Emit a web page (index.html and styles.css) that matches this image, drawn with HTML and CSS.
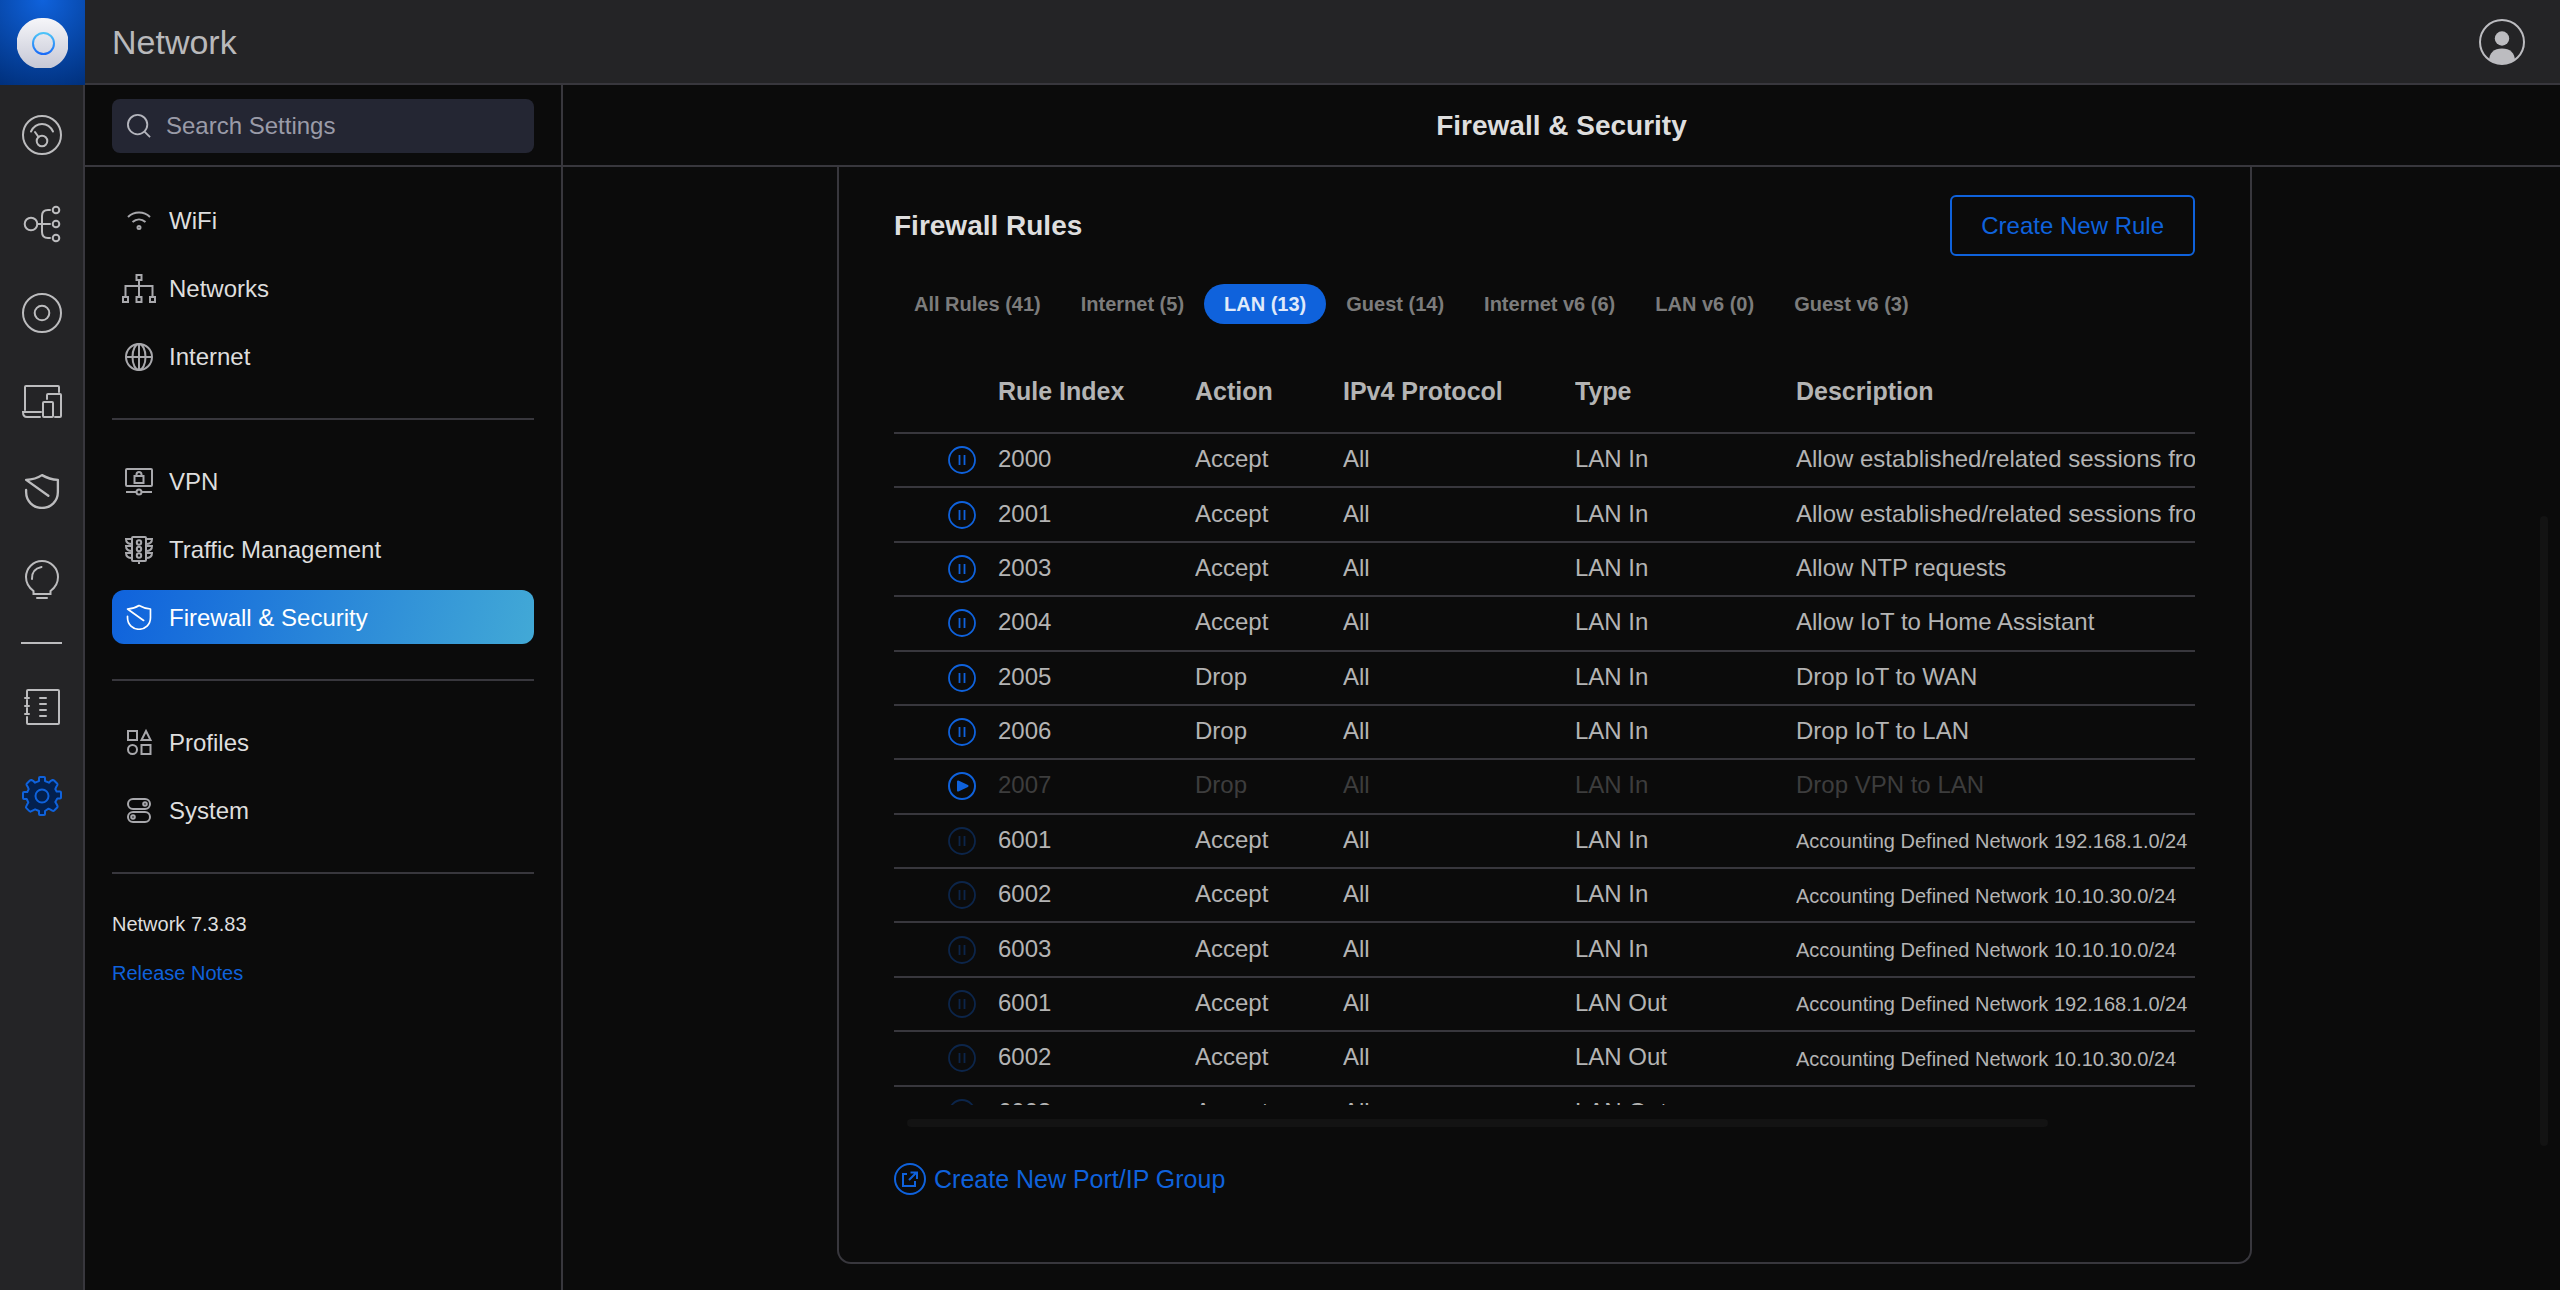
FILE: index.html
```html
<!DOCTYPE html>
<html lang="en">
<head>
<meta charset="utf-8">
<meta name="viewport" content="width=device-width, initial-scale=1">
<title>Network - Firewall &amp; Security</title>
<link rel="stylesheet" href="styles.css">
</head>
<body>
<svg class="sprite" aria-hidden="true">
  <symbol id="pause" viewBox="0 0 28 28"><circle cx="14" cy="14" r="13" fill="none" stroke="currentColor" stroke-width="1.800"/><path d="M11.500 9v10M16.500 9v10" stroke="currentColor" stroke-width="1.800"/></symbol>
  <symbol id="play" viewBox="0 0 28 28"><circle cx="14" cy="14" r="13" fill="none" stroke="currentColor" stroke-width="2"/><path d="M10 9.500 19.500 14 10 18.500z" fill="currentColor" stroke="currentColor" stroke-width="2" stroke-linejoin="round"/></symbol>
  <symbol id="shield" viewBox="0 0 34 34"><path d="M2 16v2c0 9 7 15 15 15s15-6 15-15V6.500Q24 6 17 2 11 6 2 6.500L23 21.500" fill="none" stroke="currentColor" stroke-width="2.200" stroke-linecap="round" stroke-linejoin="round"/></symbol>
</svg>
<div class="app">
  <header class="topbar">
    <a class="brand" href="#" aria-label="UniFi home">
      <svg width="52" height="52" viewBox="0 0 52 52"><defs><linearGradient id="disc" x1="0" y1="0" x2="0" y2="1"><stop offset="0" stop-color="#f6f6f9"/><stop offset="1" stop-color="#c6c8d6"/></linearGradient><linearGradient id="ring" x1="0" y1="0" x2="0" y2="1"><stop offset="0" stop-color="#4dc4f8"/><stop offset="1" stop-color="#1a6cf8"/></linearGradient></defs><path d="M26 1A25 25 0 0 1 51 20V32A25 25 0 0 1 34 51H18A25.500 25.500 0 0 1 26 1z" fill="url(#disc)"/><circle cx="26.500" cy="26.500" r="10.500" fill="none" stroke="url(#ring)" stroke-width="2"/></svg>
    </a>
    <h1 class="app-name">Network</h1>
    <button class="account" type="button" aria-label="Account">
      <svg width="46" height="46" viewBox="0 0 46 46"><defs><clipPath id="face"><circle cx="23" cy="23" r="22"/></clipPath></defs><circle cx="23" cy="23" r="22" fill="none" stroke="#bcbcc0" stroke-width="2"/><circle cx="23" cy="19.500" r="7.200" fill="#bcbcc0"/><path clip-path="url(#face)" d="M10 46v-4c0-8 5-12.500 13-12.500S36 34 36 42v4z" fill="#bcbcc0"/></svg>
    </button>
  </header>

  <nav class="rail" aria-label="Main">
    <a href="#" aria-label="Dashboard"><svg width="42" height="42" viewBox="0 0 42 42"><circle cx="21" cy="21" r="19"/><circle cx="21" cy="27" r="5.300"/><path d="M17.500 23 14 18M10 17.500c5-10 17-10 22 0"/></svg></a>
    <a href="#" aria-label="Topology"><svg width="42" height="42" viewBox="0 0 42 42"><circle cx="10" cy="21" r="6.300"/><circle cx="35" cy="7" r="3.300"/><circle cx="35" cy="21" r="3.300"/><circle cx="35" cy="35" r="3.300"/><path d="M16.500 21H29M29 7h-2q-6 0-6 6v16q0 6 6 6h2"/></svg></a>
    <a href="#" aria-label="Devices"><svg width="42" height="42" viewBox="0 0 42 42"><circle cx="21" cy="21" r="19"/><circle cx="21" cy="21" r="7.300"/></svg></a>
    <a href="#" aria-label="Clients"><svg width="42" height="42" viewBox="0 0 42 42"><path d="M4 29V6q0-1 1-1h32q1 0 1 1v5M20 31H2q0 5 4 5h13M26 18v-4q0-1 1-1h12q1 0 1 1v21q0 1-1 1h-5"/><rect x="22" y="21" width="10" height="15" rx="1"/></svg></a>
    <a href="#" aria-label="Security"><svg width="36" height="36"><use href="#shield"/></svg></a>
    <a href="#" aria-label="Insights"><svg width="42" height="42" viewBox="0 0 42 42"><path d="M12.500 35v-3Q5 26.500 5 18a16 16 0 0 1 32 0q0 8.500-7.500 14v3zM16 39h10M11 20q-.5-10 9.500-12"/></svg></a>
    <hr>
    <a href="#" aria-label="System Log"><svg width="42" height="42" viewBox="0 0 42 42"><path d="M6 12V5q0-1 1-1h30q1 0 1 1v32q0 1-1 1H7q-1 0-1-1v-6M6 14v6M6 22v6M4 12h4M4 20h4M4 28h4M19 12h6M19 18h6M19 24h6M19 30h6"/></svg></a>
    <a class="current" href="#" aria-label="Settings"><svg width="42" height="42" viewBox="0 0 42 42"><path d="M16.500 6.700 18 6V3q0-1 1-1h4q1 0 1 1v3l3.900 1.700 1.500-1.500 2.200-1.200q.7-.3 1.500.5l3 3q.7.700.3 1.500l-1.200 2-.9 2.100 1.300 2.400H39q1 0 1 1v5q0 1-1 1h-2.700l-2 3.400 1.200 2.100 1 2q.4.800-.3 1.500l-3 3q-.8.800-1.500.3l-2.200-1.100-2-1L24 36v3q0 1-1 1h-4q-1 0-1-1v-3l-3.900-1.700-2 1-2.200 1.100q-.7.500-1.500-.3l-3-3q-.7-.7-.3-1.500l1-2 1.200-2.100L5.700 24H3q-1 0-1-1v-5q0-1 1-1h3.300l1.400-2.900-.9-2.100-1.200-2q-.4-.8.300-1.500l3-3q.8-.8 1.500-.5l2.200 1.200 1.500 1.500z" stroke-linejoin="round"/><circle cx="21" cy="21" r="6.500"/></svg></a>
  </nav>

  <aside class="settings">
    <div class="search-bar">
      <label class="search">
        <svg width="24" height="24" viewBox="0 0 26 26"><circle cx="11.500" cy="11.500" r="10.500"/><path d="m19 19 6 6"/></svg>
        <input type="search" placeholder="Search Settings" aria-label="Search Settings">
      </label>
    </div>
    <nav class="menu" aria-label="Settings">
      <ul>
        <li><a href="#"><svg viewBox="0 0 34 34"><path d="M6 13c6-6 16-6 22 0M10.500 18c4-3.500 9-3.500 13 0"/><circle cx="17" cy="23.500" r="1.500"/></svg>WiFi</a></li>
        <li><a href="#"><svg viewBox="0 0 34 34"><rect x="14.500" y="3" width="5" height="5"/><rect x="1" y="25" width="5" height="5"/><rect x="14.500" y="25" width="5" height="5"/><rect x="28" y="25" width="5" height="5"/><path d="M17 8v17M3.500 25V14h27v11"/></svg>Networks</a></li>
        <li><a href="#"><svg viewBox="0 0 34 34"><circle cx="17" cy="17" r="13"/><ellipse cx="17" cy="17" rx="6.500" ry="13"/><path d="M17 4v26M4 17h26"/></svg>Internet</a></li>
      </ul>
      <ul>
        <li><a href="#"><svg viewBox="0 0 34 34"><rect x="4" y="4" width="26" height="17" rx="1"/><rect x="12.500" y="11" width="9" height="7"/><path d="M14.500 11V9.500a2.500 2.500 0 0 1 5 0V11M4 27h10.500M19.500 27H30"/><circle cx="17" cy="27" r="2.500"/></svg>VPN</a></li>
        <li><a href="#"><svg viewBox="0 0 34 34"><rect x="10" y="4" width="14" height="24" rx="1"/><circle cx="17" cy="9.500" r="2.200"/><circle cx="17" cy="16" r="2.200"/><circle cx="17" cy="22.500" r="2.200"/><path d="M17 28v3M10 6H4q0 5 6 5M10 13H4q0 5 6 5M10 20H4q0 5 6 5M24 6h6q0 5-6 5M24 13h6q0 5-6 5M24 20h6q0 5-6 5"/></svg>Traffic Management</a></li>
        <li><a class="current" href="#" aria-current="page"><svg viewBox="0 0 34 34"><use href="#shield" x="4" y="3" width="26" height="26"/></svg>Firewall &amp; Security</a></li>
      </ul>
      <ul>
        <li><a href="#"><svg viewBox="0 0 34 34"><rect x="6" y="5" width="9" height="9"/><path d="m24 5 4.500 9h-9z"/><circle cx="10.500" cy="23.500" r="4.500"/><rect x="19.500" y="19" width="9" height="9"/></svg>Profiles</a></li>
        <li><a href="#"><svg viewBox="0 0 34 34"><rect x="6" y="5" width="22" height="10" rx="5"/><rect x="6" y="18" width="22" height="10" rx="5"/><circle cx="23" cy="10" r="1.800"/><circle cx="11" cy="23" r="1.800"/></svg>System</a></li>
      </ul>
    </nav>
    <footer class="about">
      <p>Network 7.3.83</p>
      <a href="#">Release Notes</a>
    </footer>
  </aside>

  <main class="content">
    <div class="page-title"><h2>Firewall &amp; Security</h2></div>
    <div class="page">
      <section class="card">
        <div class="card-head">
          <h3>Firewall Rules</h3>
          <button class="create" type="button">Create New Rule</button>
        </div>
        <div class="tabs" role="tablist">
          <button type="button" role="tab">All Rules (41)</button>
          <button type="button" role="tab">Internet (5)</button>
          <button type="button" role="tab" aria-selected="true">LAN (13)</button>
          <button type="button" role="tab">Guest (14)</button>
          <button type="button" role="tab">Internet v6 (6)</button>
          <button type="button" role="tab">LAN v6 (0)</button>
          <button type="button" role="tab">Guest v6 (3)</button>
        </div>
        <div class="rules">
          <table>
            <colgroup><col class="c-toggle"><col class="c-index"><col class="c-action"><col class="c-proto"><col class="c-type"><col></colgroup>
            <thead><tr><th></th><th>Rule Index</th><th>Action</th><th>IPv4 Protocol</th><th>Type</th><th>Description</th></tr></thead>
            <tbody>
              <tr><td><button class="toggle" type="button" aria-label="Pause rule"><svg><use href="#pause"/></svg></button></td><td>2000</td><td>Accept</td><td>All</td><td>LAN In</td><td>Allow established/related sessions from LAN</td></tr>
              <tr><td><button class="toggle" type="button" aria-label="Pause rule"><svg><use href="#pause"/></svg></button></td><td>2001</td><td>Accept</td><td>All</td><td>LAN In</td><td>Allow established/related sessions from IoT</td></tr>
              <tr><td><button class="toggle" type="button" aria-label="Pause rule"><svg><use href="#pause"/></svg></button></td><td>2003</td><td>Accept</td><td>All</td><td>LAN In</td><td>Allow NTP requests</td></tr>
              <tr><td><button class="toggle" type="button" aria-label="Pause rule"><svg><use href="#pause"/></svg></button></td><td>2004</td><td>Accept</td><td>All</td><td>LAN In</td><td>Allow IoT to Home Assistant</td></tr>
              <tr><td><button class="toggle" type="button" aria-label="Pause rule"><svg><use href="#pause"/></svg></button></td><td>2005</td><td>Drop</td><td>All</td><td>LAN In</td><td>Drop IoT to WAN</td></tr>
              <tr><td><button class="toggle" type="button" aria-label="Pause rule"><svg><use href="#pause"/></svg></button></td><td>2006</td><td>Drop</td><td>All</td><td>LAN In</td><td>Drop IoT to LAN</td></tr>
              <tr class="paused"><td><button class="toggle" type="button" aria-label="Resume rule"><svg><use href="#play"/></svg></button></td><td>2007</td><td>Drop</td><td>All</td><td>LAN In</td><td>Drop VPN to LAN</td></tr>
              <tr class="locked"><td><button class="toggle" type="button" disabled aria-label="Pause rule"><svg><use href="#pause"/></svg></button></td><td>6001</td><td>Accept</td><td>All</td><td>LAN In</td><td>Accounting Defined Network 192.168.1.0/24</td></tr>
              <tr class="locked"><td><button class="toggle" type="button" disabled aria-label="Pause rule"><svg><use href="#pause"/></svg></button></td><td>6002</td><td>Accept</td><td>All</td><td>LAN In</td><td>Accounting Defined Network 10.10.30.0/24</td></tr>
              <tr class="locked"><td><button class="toggle" type="button" disabled aria-label="Pause rule"><svg><use href="#pause"/></svg></button></td><td>6003</td><td>Accept</td><td>All</td><td>LAN In</td><td>Accounting Defined Network 10.10.10.0/24</td></tr>
              <tr class="locked"><td><button class="toggle" type="button" disabled aria-label="Pause rule"><svg><use href="#pause"/></svg></button></td><td>6001</td><td>Accept</td><td>All</td><td>LAN Out</td><td>Accounting Defined Network 192.168.1.0/24</td></tr>
              <tr class="locked"><td><button class="toggle" type="button" disabled aria-label="Pause rule"><svg><use href="#pause"/></svg></button></td><td>6002</td><td>Accept</td><td>All</td><td>LAN Out</td><td>Accounting Defined Network 10.10.30.0/24</td></tr>
              <tr class="locked"><td><button class="toggle" type="button" disabled aria-label="Pause rule"><svg><use href="#pause"/></svg></button></td><td>6003</td><td>Accept</td><td>All</td><td>LAN Out</td><td>Accounting Defined Network 10.10.10.0/24</td></tr>
            </tbody>
          </table>
        </div>
        <div class="scroll-x"></div>
        <a class="new-group" href="#"><svg width="32" height="32" viewBox="0 0 32 32"><circle cx="16" cy="16" r="15"/><path d="M13 11H9v12h12v-5M15 17l7-7M16.500 9.500H23V16"/></svg>Create New Port/IP Group</a>
      </section>
      <div class="scroll-y"></div>
    </div>
  </main>
</div>
</body>
</html>
```

FILE: styles.css
```css
:root {
  --bg: #0b0b0b;
  --bar: #242426;
  --line: #38373d;
  --blue: #0f62dc;
  --text: #dedede;
  --muted: #b4b4b4;
}

* { box-sizing: border-box; }

body {
  margin: 0;
  background: var(--bg);
  color: var(--text);
  font-family: "Liberation Sans", Arial, sans-serif;
  font-size: 24px;
  line-height: 32px;
}

h1, h2, h3, p, ul { margin: 0; padding: 0; }
ul { list-style: none; }
a { color: var(--blue); text-decoration: none; }
button { margin: 0; padding: 0; border: 0; background: none; color: inherit; font: inherit; cursor: pointer; }
.sprite { display: none; }

.app {
  display: grid;
  grid-template: 85px 1fr / 85px 478px 1fr;
  height: 100vh;
  overflow: hidden;
}

/* top bar */
.topbar {
  grid-column: 1 / -1;
  display: flex;
  align-items: center;
  background: var(--bar);
}
.brand {
  display: grid;
  place-items: center;
  width: 85px;
  height: 85px;
  background: radial-gradient(circle at 50% 0, #0f62dc, #00307c);
}
.app-name {
  flex: 1;
  height: 85px;
  padding-left: 27px;
  border-bottom: 2px solid var(--line);
  color: #b9b9bb;
  font-size: 34px;
  font-weight: 400;
  line-height: 84px;
}
.account {
  display: flex;
  align-items: center;
  height: 85px;
  padding-right: 35px;
  border-bottom: 2px solid var(--line);
}

/* icon rail */
.rail {
  display: flex;
  flex-direction: column;
  align-items: center;
  padding-top: 5px;
  border-right: 2px solid var(--line);
  background: var(--bar);
}
.rail a {
  display: grid;
  place-items: center;
  width: 83px;
  height: 89px;
  color: #bcbcbe;
}
.rail svg { fill: none; stroke: currentColor; stroke-width: 2; stroke-linecap: round; }
.rail hr {
  width: 41px;
  height: 2px;
  margin: 18px 0;
  border: 0;
  background: #bcbcbe;
}
.rail .current { color: var(--blue); }
.rail .current path { fill: #03204e; }

/* settings sidebar */
.settings { border-right: 2px solid var(--line); }
.search-bar {
  height: 82px;
  padding: 14px 27px 0;
  border-bottom: 2px solid var(--line);
}
.search {
  display: flex;
  align-items: center;
  gap: 15px;
  height: 54px;
  padding: 0 15px;
  border-radius: 8px;
  background: #242633;
}
.search svg { flex: none; fill: none; stroke: #b4b5bd; stroke-width: 2; }
.search input {
  width: 100%;
  padding: 0;
  border: 0;
  outline: 0;
  background: none;
  color: var(--text);
  font: inherit;
}
.search input::placeholder { color: #9a9ba8; opacity: 1; }

.menu { padding: 0 27px; }
.menu ul {
  display: grid;
  gap: 14px;
  padding: 34px 0 35px;
  border-bottom: 2px solid var(--line);
}
.menu ul:first-child { padding-top: 26px; }
.menu a {
  display: flex;
  align-items: center;
  gap: 13px;
  height: 54px;
  padding: 2px 0 0 10px;
  border-radius: 12px;
  color: var(--text);
}
.menu svg { width: 34px; height: 34px; fill: none; stroke: #a8a8ac; stroke-width: 2; }
.menu .current {
  background: linear-gradient(105deg, #0f62dc, #42a9d6);
  color: #fff;
}
.about { padding: 34px 27px; font-size: 20px; }
.about p { margin-bottom: 17px; }

/* content */
.content { display: flex; flex-direction: column; min-width: 0; min-height: 0; }
.page-title {
  flex: none;
  height: 82px;
  border-bottom: 2px solid var(--line);
  text-align: center;
}
.page-title h2 { font-size: 28px; line-height: 82px; }
.page {
  position: relative;
  flex: 1;
  min-height: 0;
  padding: 0 308px 26px 274px;
}
.card {
  display: flex;
  flex-direction: column;
  height: 100%;
  padding: 28px 55px 0;
  border: 2px solid var(--line);
  border-top: 0;
  border-radius: 0 0 14px 14px;
}
.card-head { display: flex; align-items: center; justify-content: space-between; }
.card-head h3 { font-size: 28px; }
.create {
  height: 61px;
  padding: 0 29px;
  border: 2px solid var(--blue);
  border-radius: 6px;
  color: var(--blue);
}
.tabs { display: flex; margin-top: 28px; }
.tabs button {
  height: 40px;
  padding: 0 20px;
  border-radius: 20px;
  color: #7c7c7c;
  font-size: 20px;
  font-weight: 700;
}
.tabs [aria-selected] { background: var(--blue); color: #dfe9fa; }

.rules { height: 781px; overflow: hidden; color: var(--muted); }
table { width: 100%; height: 817px; border-collapse: collapse; table-layout: fixed; }
.c-toggle { width: 104px; }
.c-index { width: 197px; }
.c-action { width: 148px; }
.c-proto { width: 232px; }
.c-type { width: 221px; }
th { height: 109px; padding: 26px 0 0; font-size: 25px; text-align: left; }
td, th { overflow: hidden; white-space: nowrap; }
tr { border-bottom: 2px solid var(--line); }
td { height: 54px; padding: 0 0 2px; }
td:first-child { padding: 0 22px 0 0; }
.toggle { display: block; margin-left: auto; color: var(--blue); }
.toggle svg { display: block; width: 28px; height: 28px; }
.toggle:disabled { opacity: .3; }
.paused td:not(:first-child) { color: #3d3d3d; }
.locked td:last-child { padding: 1px 0 0; font-size: 20px; }

.scroll-x {
  width: 1141px;
  max-width: 100%;
  height: 8px;
  margin: 14px 0 36px 13px;
  border-radius: 4px;
  background: #131313;
}
.scroll-y {
  position: absolute;
  top: 349px;
  right: 12px;
  width: 8px;
  height: 630px;
  border-radius: 4px;
  background: #131313;
}
.new-group { display: flex; align-items: center; gap: 8px; font-size: 25px; }
.new-group svg { fill: none; stroke: currentColor; stroke-width: 2; }
```
